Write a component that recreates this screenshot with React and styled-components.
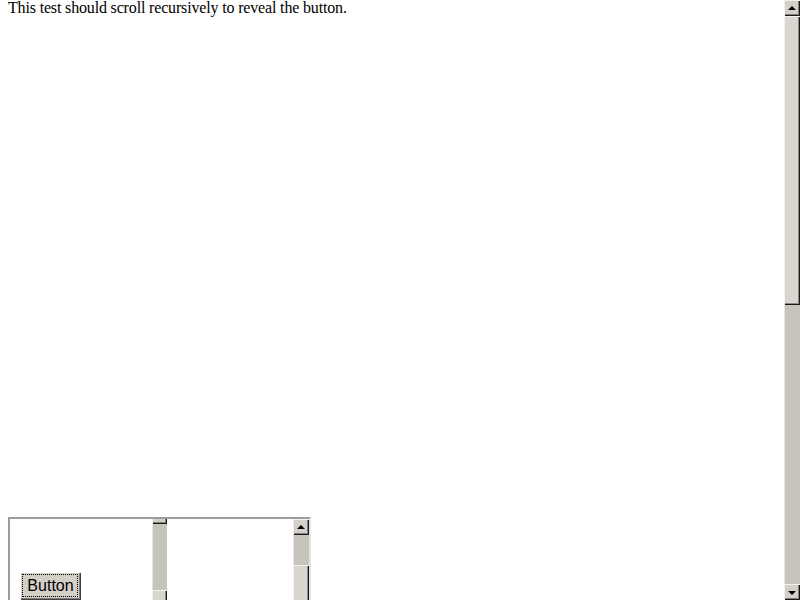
import React from "react";
import styled, { createGlobalStyle } from "styled-components";

const Global = createGlobalStyle`
  html, body {
    margin: 0;
    padding: 0;
    background: #fff;
    overflow: hidden;
  }
  body {
    font-family: "Liberation Serif", "Times New Roman", serif;
    font-size: 16px;
    color: #000;
  }
`;

const Screen = styled.div`
  display: flex;
  width: 800px;
  height: 600px;
  overflow: hidden;
`;

const Page = styled.div`
  flex: 1;
  padding-left: 8px;
  overflow: hidden;
`;

const Intro = styled.p`
  margin: 0;
  line-height: 15px;
  letter-spacing: -0.16px;
  white-space: nowrap;
`;

// the outer scroll box, scrolled to its bottom
const OuterBox = styled.div`
  margin-top: 502px;
  width: 299px;
  height: 150px;
  display: flex;
  border-style: solid;
  border-width: 2px;
  border-color: #9c9c9c #e4e4e4 #e4e4e4 #9c9c9c;
  overflow: hidden;
`;

const OuterContent = styled.div`
  flex: 1;
  display: flex;
  align-items: flex-start;
  overflow: hidden;
`;

// inner scroller, its top is scrolled out of view
const InnerBox = styled.div`
  width: 157px;
  height: 160px;
  margin-top: -11px;
  display: flex;
  flex: none;
`;

const InnerContent = styled.div`
  flex: 1;
  padding: 64px 0 0 10px;
`;

const Button = styled.button`
  position: relative;
  font-family: "Liberation Sans", Arial, sans-serif;
  font-size: 16px;
  line-height: 18px;
  color: #000;
  background: #d4d0c8;
  padding: 4px 6px 4px 6px;
  border: none;
  box-shadow: inset 1px 1px #ffffff, inset -1px -1px #404040, inset -2px -2px #808080;
  width: 61px;
  height: 28px;
  &::after {
    content: "";
    position: absolute;
    inset: 2px 3px 3px 2px;
    border: 1px dotted #000;
  }
`;

const Bar = styled.div`
  width: ${(p) => p.$w || 16}px;
  flex: none;
  display: flex;
  flex-direction: column;
  height: ${(p) => p.$h}px;
  background: #c6c4bd;
  box-shadow: inset 1px 0 #e6e4e0;
`;

const ArrowButton = styled.div`
  height: 16px;
  flex: none;
  display: flex;
  align-items: center;
  justify-content: center;
  background: #d4d0c8;
  box-shadow: inset 1px 1px #f2f1ee, inset -1px -1px #1a1a1a, inset -2px -2px #808080;
`;

const Triangle = styled.span`
  width: 0;
  height: 0;
  border-left: 4px solid transparent;
  border-right: 4px solid transparent;
  ${(p) =>
    p.$down
      ? "border-top: 4px solid #000; margin-top: 1px;"
      : "border-bottom: 4px solid #000; margin-top: -1px;"}
`;

const TrackGap = styled.div`
  flex: ${(p) => (p.$fill ? 1 : "none")};
`;

const Thumb = styled.div`
  flex: none;
  background: #d9d6d0;
  box-shadow: inset 1px 1px #f4f3f0, inset -1px -1px #1a1a1a, inset -2px -2px #8a8a8a;
`;

function Scrollbar({ height, before, thumb, width }) {
  return (
    <Bar $h={height} $w={width}>
      <ArrowButton>
        <Triangle />
      </ArrowButton>
      <TrackGap style={{ height: before }} />
      <Thumb style={{ height: thumb }} />
      <TrackGap $fill />
      <ArrowButton>
        <Triangle $down />
      </ArrowButton>
    </Bar>
  );
}

export default function App() {
  return (
    <>
      <Global />
      <Screen>
        <Page>
          <Intro>This test should scroll recursively to reveal the button.</Intro>
          <OuterBox>
            <OuterContent>
              <InnerBox>
                <InnerContent>
                  <Button>Button</Button>
                </InnerContent>
                <Scrollbar height={160} before={66} thumb={60} width={15} />
              </InnerBox>
            </OuterContent>
            <Scrollbar height={150} before={30} thumb={80} />
          </OuterBox>
        </Page>
        <Scrollbar height={600} before={0} thumb={289} />
      </Screen>
    </>
  );
}
